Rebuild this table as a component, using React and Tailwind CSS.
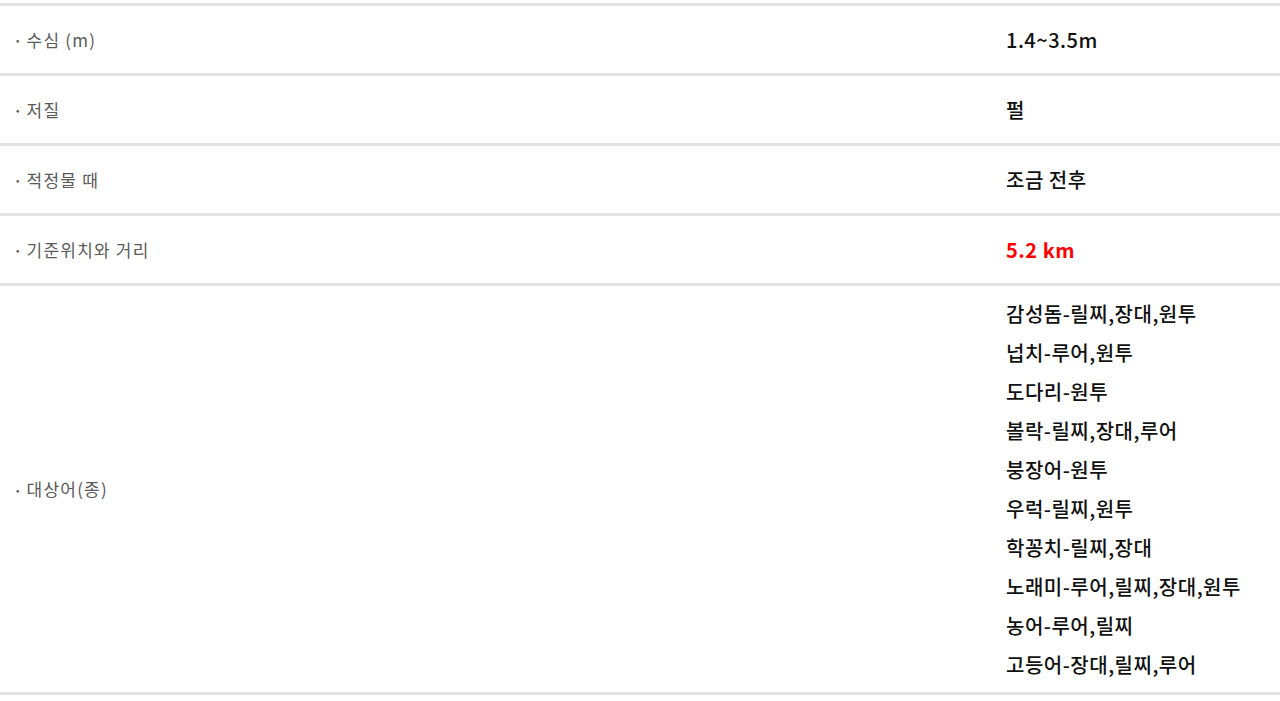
const rows = [
  { label: '수심 (m)', values: ['1.4~3.5m'] },
  { label: '저질', values: ['펄'] },
  { label: '적정물 때', values: ['조금 전후'] },
  { label: '기준위치와 거리', values: ['5.2 km'], red: true },
  {
    label: '대상어(종)',
    values: [
      '감성돔-릴찌,장대,원투',
      '넙치-루어,원투',
      '도다리-원투',
      '볼락-릴찌,장대,루어',
      '붕장어-원투',
      '우럭-릴찌,원투',
      '학꽁치-릴찌,장대',
      '노래미-루어,릴찌,장대,원투',
      '농어-루어,릴찌',
      '고등어-장대,릴찌,루어',
    ],
  },
];

export default function App() {
  return (
    <div
      className="min-h-screen bg-white pt-[3px]"
      style={{ fontFamily: '"Noto Sans CJK KR", "Noto Sans", sans-serif' }}
    >
      <div className="border-b-[3px] border-[#e2e2e2]">
        {rows.map((row) => (
          <div
            key={row.label}
            className="grid grid-cols-[990px_1fr] border-t-[3px] border-[#e2e2e2]"
          >
            <div className="flex items-center pl-[16px] text-[17px] tracking-[1.2px] text-[#5a5a5a]">
              <span className="mr-[6px] text-[10px] text-[#555]">•</span>
              {row.label}
            </div>
            <div
              className={`px-4 ${
                row.values.length > 1 ? 'py-2 leading-[39px]' : 'h-[67px] flex items-center'
              }`}
            >
              {row.values.map((v) => (
                <div
                  key={v}
                  className={`text-[20px] tracking-[0.5px] ${
                    row.red ? 'text-[#ff0000] font-bold' : 'text-[#111] font-medium'
                  }`}
                >
                  {v}
                </div>
              ))}
            </div>
          </div>
        ))}
      </div>
    </div>
  );
}
